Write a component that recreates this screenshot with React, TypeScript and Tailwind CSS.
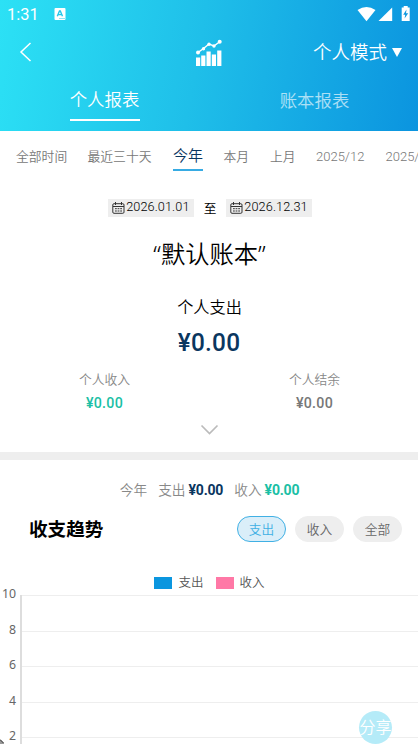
import React from "react";

const ranges = [
  { label: "全部时间", cls: "ml-4 w-[51px]" },
  { label: "最近三十天", cls: "ml-[20.5px] w-[64px]" },
  { label: "今年", cls: "ml-[21.5px] w-[30px]", active: true },
  { label: "本月", cls: "ml-[20.5px] w-[26px]" },
  { label: "上月", cls: "ml-[20.5px] w-[26px]" },
  { label: "2025/12", cls: "ml-[20px] w-[49px]" },
  { label: "2025/11", cls: "ml-[20.5px] w-[49px]" },
];

const ticks = [10, 8, 6, 4, 2];

function StatusBar() {
  return (
    <div className="flex h-7 items-center pl-[7px] pr-[8px]">
      <span className="w-[32px] pt-px text-[16.4px] font-normal leading-7 font-['Roboto']">1:31</span>
      <svg className="ml-[15px]" width="12" height="12" viewBox="0 0 12 12">
        <rect x="0.5" width="11" height="12" rx="1" fill="#fff" />
        <path d="M3.3 8.2 L5.5 3 H6.3 L8.5 8.2 M4.2 6.6 H7.6" fill="none" stroke="#24c7e9" strokeWidth="1.4" />
        <path d="M5.5 10.5 h1 m1 0 h1 m1 0 h1" stroke="#24c7e9" strokeWidth="1" />
      </svg>
      <svg className="ml-auto" width="53" height="16" viewBox="0 0 53 16">
        <path d="M0.5 4 Q9.5 -1.8 18.5 4 L9.5 15.2 Z" fill="#fff" />
        <path d="M21.5 15 L35.2 1.5 V15 Z" fill="#fff" />
        <path d="M44.7 1.5 h2 V0 h4 v1.5 h2 V15 h-8 Z" fill="#fff" />
        <path d="M49.5 3.5 L46.2 8.7 h2 L47.6 12.5 L51.2 7.2 h-2.2 Z" fill="#1199df" />
      </svg>
    </div>
  );
}

function Header() {
  return (
    <header className="h-[131px] bg-[linear-gradient(100deg,#2ce1f5_0%,#1fbfe9_47%,#0b94df_100%)] text-white">
      <StatusBar />
      <div className="grid h-12 grid-cols-3 items-center">
        <svg className="ml-[19px]" width="14" height="22" viewBox="0 0 14 22">
          <path d="M11.5 2 L2 11 L11.5 20" fill="none" stroke="#fff" strokeWidth="1.5" />
        </svg>
        <svg className="justify-self-center" width="28" height="28" viewBox="0 0 28 28">
          <path d="M3 14.5 L8.5 10.5 L14 6 L19 8 L25 3.5" fill="none" stroke="#fff" strokeWidth="1.5" />
          <circle cx="3" cy="14.5" r="2" fill="#fff" />
          <circle cx="8.5" cy="10.8" r="1.7" fill="#fff" />
          <circle cx="14" cy="6.3" r="1.7" fill="#fff" />
          <circle cx="19" cy="8" r="1.7" fill="#fff" />
          <circle cx="24.7" cy="3.7" r="2" fill="#fff" />
          <path d="M1 19.5h4.2V28H1z M6.2 17.5h4.2V28H6.2z M11.5 13.5h4.2V28h-4.2z M16.8 16.5H21V28h-4.2z M22.2 12.5h4.2V28h-4.2z" fill="#fff" />
        </svg>
        <div className="mr-4 flex items-center justify-end whitespace-nowrap text-[18.5px]">
          个人模式
          <svg className="ml-[5px]" width="10" height="9" viewBox="0 0 10 9">
            <path d="M0 0h10L5 9z" fill="#fff" />
          </svg>
        </div>
      </div>
      <div className="grid grid-cols-2 text-center text-[17.4px]">
        <div>
          <div className="mx-auto h-[45px] w-[70px] whitespace-nowrap border-b-2 border-white leading-[46px]">个人报表</div>
        </div>
        <div className="pl-[2px] leading-[48px] text-white/65">账本报表</div>
      </div>
    </header>
  );
}

function CalendarIcon() {
  return (
    <svg width="13" height="12" viewBox="0 0 13 12" fill="none" stroke="#333">
      <rect x="0.8" y="1.7" width="11.2" height="9.6" rx="1.2" strokeWidth="1" />
      <path d="M3.5 0v3 M9.5 0v3 M1 4.5h11" strokeWidth="1" />
      <path d="M3 6.7h7 M3 9h7" strokeWidth="1" strokeDasharray="1.8 0.8" />
    </svg>
  );
}

function DateBox({ value }: { value: string }) {
  return (
    <div className="flex h-[18px] w-[85.5px] items-center bg-[#eee] pl-1">
      <CalendarIcon />
      <span className="ml-px pb-[3px] font-['Roboto'] text-[12.7px] leading-[16px] tracking-[0.1px]">{value}</span>
    </div>
  );
}

function Pill({ label, active = false }: { label: string; active?: boolean }) {
  return (
    <div
      className={
        "flex h-[26px] w-[49px] items-center justify-center rounded-full border pt-px text-[12.7px] " +
        (active ? "border-[#40b0e4] bg-[#daeef9] text-[#40b0e4]" : "border-[#eee] bg-[#eee] text-[#666]")
      }
    >
      {label}
    </div>
  );
}

export default function App() {
  return (
    <div className="relative h-[744px] w-[418px] overflow-hidden bg-white font-['Noto_Sans','Noto_Sans_CJK_SC',sans-serif] font-[350] text-black">
      <Header />
      <nav className="flex h-[50px] overflow-hidden whitespace-nowrap text-[12.8px] leading-[50px] text-[#777]">
        {ranges.map((r) => (
          <div key={r.label} className={"shrink-0 " + r.cls + (r.label.startsWith("2") ? " pt-px font-['Roboto'] text-[13px]" : "")}>
            {r.active ? (
              <div className="h-10 border-b-[2.5px] border-[#37abe3] text-[15px] leading-[49px] text-[#0a365f]">{r.label}</div>
            ) : (
              r.label
            )}
          </div>
        ))}
      </nav>
      <div className="mt-[18px] flex h-[18px] items-center justify-center pl-[2px] text-[12.7px]">
        <DateBox value="2026.01.01" />
        <span className="mx-[10px] pt-[2px]">至</span>
        <DateBox value="2026.12.31" />
      </div>
      <h1 className="mt-[17px] h-10 pl-px text-center text-[24.3px] leading-10">“默认账本”</h1>
      <section className="mt-[21px] text-center">
        <div className="h-6 pl-px text-[16.2px] leading-6">个人支出</div>
        <div className="mt-[7px] h-8 origin-center scale-x-[0.92] font-['Roboto'] text-[26.5px] font-medium leading-8 tracking-[0.3px] text-[#0a365f]">¥0.00</div>
        <div className="mt-[9px] grid grid-cols-2 text-[12.8px] leading-6 text-[#888]">
          <div>
            <div>个人收入</div>
            <div className="scale-x-[0.93] font-['Roboto'] text-[15.3px] font-medium tracking-[0.3px] text-[#1abfa5]">¥0.00</div>
          </div>
          <div className="pl-[2px]">
            <div>个人结余</div>
            <div className="scale-x-[0.93] font-['Roboto'] text-[15.3px] font-medium tracking-[0.3px] text-[#777]">¥0.00</div>
          </div>
        </div>
        <svg className="mx-auto mt-[9px]" width="19" height="12" viewBox="0 0 19 12">
          <path d="M1.5 1.5 L9.5 9.5 L17.5 1.5" fill="none" stroke="#bbb" strokeWidth="1.7" />
        </svg>
      </section>
      <div className="mt-4 h-2 bg-[#eee]" />
      <div className="mt-[18px] flex h-6 items-center justify-center pl-px text-[13.7px] text-[#888]">
        <span>今年</span>
        <span className="ml-[11px]">支出</span>
        <span className="ml-[3px] pt-px font-['Roboto'] text-[14px] font-bold tracking-[-0.2px] text-[#0a365f]">¥0.00</span>
        <span className="ml-[11px]">收入</span>
        <span className="ml-[3px] pt-px font-['Roboto'] text-[14px] font-bold tracking-[-0.2px] text-[#1abfa5]">¥0.00</span>
      </div>
      <div className="mt-[14px] flex h-[26px] items-center justify-between pl-[29px] pr-4">
        <h2 className="text-[18.6px] font-bold">收支趋势</h2>
        <div className="flex gap-[9px]">
          <Pill label="支出" active />
          <Pill label="收入" />
          <Pill label="全部" />
        </div>
      </div>
      <div className="mt-[31px] flex h-5 items-center justify-center pl-px text-[12.5px] text-[#555]">
        <span className="h-3 w-[18px] bg-[#0b96df]" />
        <span className="ml-[6px]">支出</span>
        <span className="ml-3 h-3 w-[18px] bg-[#ff78a6]" />
        <span className="ml-[6px]">收入</span>
      </div>
      <div className="mt-[2px] flex">
        <div className="-mt-[11px] w-5 pr-[4px] text-right text-[12.3px] font-normal text-[#666]">
          {ticks.map((t) => (
            <div key={t} className="h-[35.5px] leading-5">{t}</div>
          ))}
        </div>
        <div className="h-[160px] flex-1 border-l-2 border-[#ddd]">
          {ticks.map((t) => (
            <div key={t} className="h-[35.5px] border-t border-[#eee]" />
          ))}
        </div>
      </div>
      <button className="absolute left-[359px] top-[711px] h-[33px] w-[33px] whitespace-nowrap rounded-full bg-[#b5ebf8] text-[16px] leading-[33px] text-white">
        分享
      </button>
      <svg className="absolute bottom-0 left-0" width="4" height="5" viewBox="0 0 4 5">
        <path d="M0 1 L4 5 H0z" fill="#999" />
        <path d="M0 0.5 L4 4.5" stroke="#000" />
      </svg>
    </div>
  );
}
